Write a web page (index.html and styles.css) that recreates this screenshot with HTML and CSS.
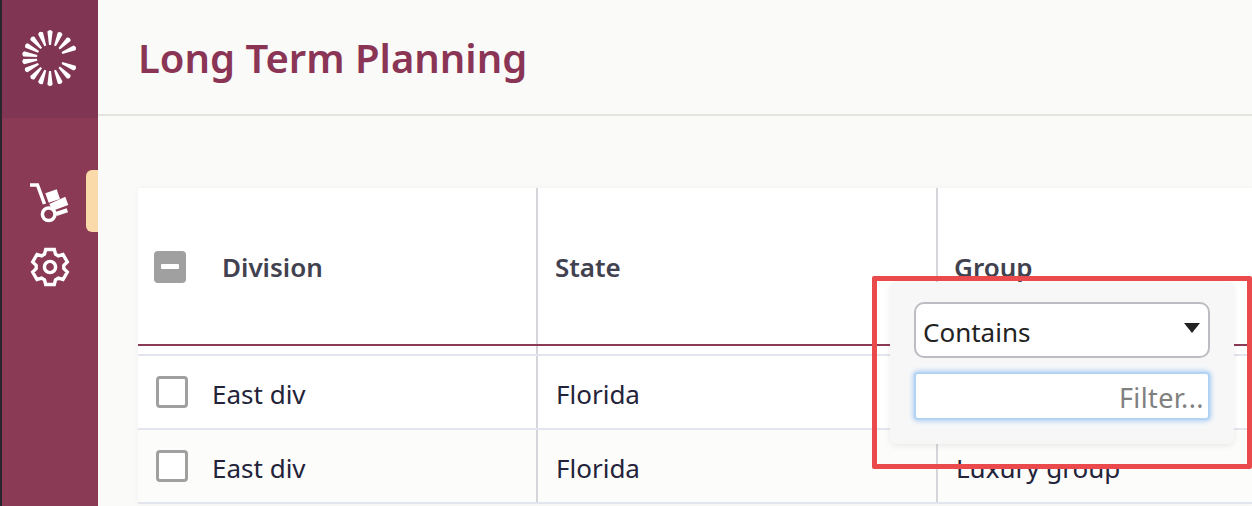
FILE: index.html
```html
<!DOCTYPE html>
<html lang="en">
<head>
<meta charset="utf-8">
<title>Long Term Planning</title>
<link rel="stylesheet" href="styles.css">
</head>
<body>
<div class="app">
  <aside class="sidebar">
    <div class="logo">
      <svg class="logo-mark" viewBox="-30 -30 60 60" aria-hidden="true">
        <defs><path id="spoke" d="M-1 -13 L1 -13 L2.600 -26.500 Q0 -29.500 -2.600 -26.500 Z"/></defs>
        <g fill="#fff">
          <use href="#spoke"/>
          <use href="#spoke" transform="rotate(22.5)"/>
          <use href="#spoke" transform="rotate(45)"/>
          <use href="#spoke" transform="rotate(67.5)"/>
          <use href="#spoke" transform="rotate(112.5)"/>
          <use href="#spoke" transform="rotate(135)"/>
          <use href="#spoke" transform="rotate(157.5)"/>
          <use href="#spoke" transform="rotate(180)"/>
          <use href="#spoke" transform="rotate(201)"/>
          <use href="#spoke" transform="rotate(222)"/>
          <use href="#spoke" transform="rotate(243)"/>
          <use href="#spoke" transform="rotate(262)"/>
          <use href="#spoke" transform="rotate(279)"/>
          <use href="#spoke" transform="rotate(298)"/>
          <use href="#spoke" transform="rotate(318)"/>
          <use href="#spoke" transform="rotate(339)"/>
        </g>
      </svg>
    </div>
    <nav class="nav">
      <div class="nav-item">
        <svg class="nav-icon" viewBox="26 181 44 44" aria-hidden="true">
          <path class="line" d="M30 185H37.500L44.500 204"/>
          <circle class="line" cx="48.700" cy="214.300" r="6.300"/>
          <path class="solid" d="M45.300 193.300L56.700 189.300L60 199L48.700 202.700Z"/>
          <path class="solid" d="M49.300 204L65.300 196.700L68.300 205L52.700 210.700Z"/>
          <path class="solid" d="M55.300 212L66.700 208.300L68 212.300L56.700 216Z"/>
        </svg>
      </div>
      <div class="nav-item gear-item">
        <svg class="nav-icon" viewBox="-22 -22 44 44" aria-hidden="true">
          <path class="gear" d="M-4.300 -17.500L4.300 -17.500L5.500 -12.800L8.330 -11.160L13 -12.500L17.300 -5L13.830 -1.640L13.830 1.640L17.300 5L13 12.500L8.330 11.160L5.500 12.800L4.300 17.500L-4.300 17.500L-5.500 12.800L-8.330 11.160L-13 12.500L-17.300 5L-13.830 1.640L-13.830 -1.640L-17.300 -5L-13 -12.500L-8.330 -11.160L-5.500 -12.800Z"/>
          <circle class="gear" cx="0" cy="0" r="5.600"/>
        </svg>
      </div>
      <span class="nav-active"></span>
    </nav>
  </aside>
  <main class="main">
    <header class="topbar"><h1 class="title">Long Term Planning</h1></header>
    <section class="grid">
      <div class="row head">
        <div class="cell first"><span class="check mixed"></span><span class="head-label">Division</span></div>
        <div class="cell"><span>State</span></div>
        <div class="cell group"><span>Group</span></div>
      </div>
      <div class="row">
        <div class="cell first"><span class="check"></span><span>East div</span></div>
        <div class="cell"><span>Florida</span></div>
        <div class="cell"><span>Luxury group</span></div>
      </div>
      <div class="row alt">
        <div class="cell first"><span class="check"></span><span>East div</span></div>
        <div class="cell"><span>Florida</span></div>
        <div class="cell"><span>Luxury group</span></div>
      </div>
    </section>
  </main>
</div>
<div class="popup">
  <div class="select"><span>Contains</span><span class="caret"></span></div>
  <input class="filter" type="text" placeholder="Filter...">
</div>
<div class="annotation"></div>
</body>
</html>
```

FILE: styles.css
```css
* { box-sizing: border-box; }
html, body { margin: 0; height: 100%; overflow: hidden; }
body { font-family: "Noto Sans", "Open Sans", sans-serif; color: #23233a; background: #fafaf8; }

.app { display: flex; width: 1252px; height: 506px; }

.sidebar { width: 98px; flex: none; background: #8b3a56; border-left: 2px solid #26262c; position: relative; }
.logo { height: 118px; background: #803553; display: flex; align-items: center; justify-content: center; }
.logo-mark { width: 60px; height: 60px; margin: 0 0 2px -1px; }
.nav { position: relative; display: flex; flex-direction: column; align-items: center; padding-top: 60px; gap: 14px; }
.nav-item { height: 50px; display: flex; align-items: center; justify-content: center; margin-left: -4px; }
.gear-item { margin-left: 0; }
.nav-icon { width: 44px; height: 44px; overflow: visible; }
.line { fill: none; stroke: #fff; stroke-width: 3.5; }
.solid { fill: #fff; }
.gear { fill: none; stroke: #fff; stroke-width: 3.4; stroke-linejoin: miter; }
.nav-active { position: absolute; right: 0; top: 52px; width: 12px; height: 62px; background: #fadaa8; border-radius: 6px 0 0 6px; }

.main { flex: 1; min-width: 0; }
.topbar { height: 116px; border-bottom: 2px solid #e4e4df; display: flex; align-items: center; padding-left: 40px; }
.title { margin: 0; font-size: 40px; font-weight: 600; color: #8a3555; }

.grid { margin: 72px 0 0 40px; background: #fff; box-shadow: 0 0 6px rgba(0,0,0,.04); }
.row { display: grid; grid-template-columns: 400px 400px 1fr; height: 74px; border-bottom: 2px solid #e2e5ee; font-size: 26px; }
.row.alt { background: #fcfcfa; }
.row.head { height: 168px; font-size: 26px; font-weight: 600; color: #41414f; position: relative; border-bottom: 2px solid #e2e5ee; }
.row.head::after { content: ""; position: absolute; left: 0; right: 0; bottom: 8px; height: 2px; background: #8b3a56; }
.cell { display: flex; align-items: center; padding-left: 18px; padding-top: 4px; border-right: 2px solid #d6d6da; }
.cell:last-child { border-right: 0; }
.first { padding-left: 18px; gap: 24px; }
.head .cell { padding-top: 0; padding-bottom: 8px; padding-left: 17px; }
.head .first { padding-left: 16px; gap: 36px; }
.head .group { padding-left: 16px; }
.check { width: 32px; height: 32px; border: 3px solid #a0a0a0; border-radius: 4px; background: #fff; flex: none; margin-top: -4px; }
.check.mixed { background: #a0a0a0; position: relative; margin-top: 0; }
.check.mixed::after { content: ""; position: absolute; left: 4px; right: 4px; top: 10px; height: 5px; background: #fff; border-radius: 1px; }

.popup { position: absolute; left: 890px; top: 282px; width: 344px; height: 162px; background: #f7f7f7; border-radius: 6px; box-shadow: 0 2px 6px rgba(0,0,0,.08); padding: 20px 24px 0; display: flex; flex-direction: column; gap: 14px; }
.select { height: 56px; border: 2px solid #bcbcc2; border-radius: 10px; background: #fff; display: flex; align-items: center; justify-content: space-between; padding: 3px 8px 0 7px; font-size: 26px; color: #222; }
.caret { width: 0; height: 0; border-left: 8.5px solid transparent; border-right: 8.5px solid transparent; border-top: 10px solid #222; margin-bottom: 8px; }
.filter { height: 48px; border: 2px solid #b3d3f5; border-radius: 4px; background: #fff; box-shadow: 0 0 5px 1px #a9cdf5; font: 27px "Noto Sans", sans-serif; letter-spacing: .4px; text-align: right; padding: 3px 4px 0; outline: 0; width: 100%; }
.filter::placeholder { color: #808080; opacity: 1; }

.annotation { position: absolute; left: 872px; top: 276px; width: 380px; height: 193px; border: 5px solid #eb4a4d; border-radius: 2px; pointer-events: none; }
```
